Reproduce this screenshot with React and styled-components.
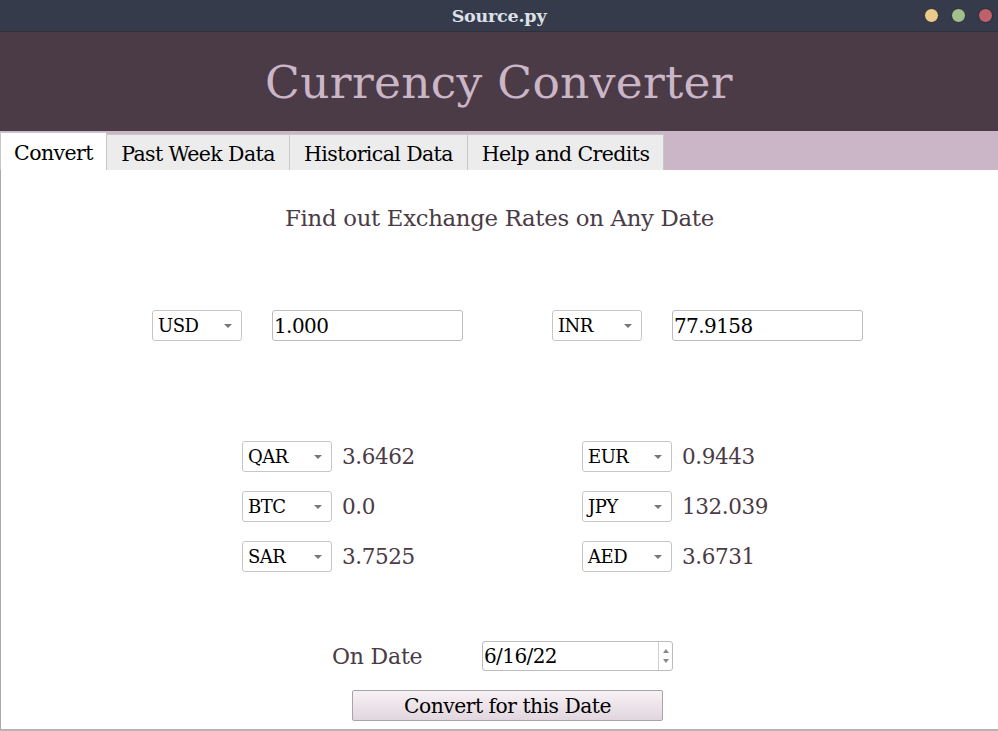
import React from "react";
import styled, { createGlobalStyle } from "styled-components";

const Global = createGlobalStyle`
  html, body { margin: 0; padding: 0; background: #ffffff; }
  body { font-family: "DejaVu Serif", "Liberation Serif", serif; }
  * { box-sizing: border-box; }
`;

const Window = styled.div`
  width: 998px;
  height: 731px;
  display: flex;
  flex-direction: column;
  overflow: hidden;
  font-family: "DejaVu Serif", "Liberation Serif", serif;
`;

const TitleBar = styled.div`
  height: 32px;
  background: #353b4a;
  display: flex;
  align-items: center;
  justify-content: center;
  position: relative;
  border-bottom: 1px solid #2c303b;
`;

const TitleText = styled.div`
  color: #dde1e8;
  font-weight: bold;
  font-size: 17.5px;
  letter-spacing: -0.2px;
`;

const Dots = styled.div`
  position: absolute;
  right: 5px;
  top: 8px;
  display: flex;
  gap: 12px;
`;

const Dot = styled.span`
  width: 15px;
  height: 15px;
  border-radius: 50%;
  background: ${(p) => p.$c};
  border: 1px solid #262a33;
`;

const Header = styled.div`
  height: 99px;
  background: #4a3b46;
  display: flex;
  align-items: center;
  justify-content: center;
`;

const AppTitle = styled.h1`
  margin: 0;
  font-weight: normal;
  font-size: 45.5px;
  color: #cbb6c8;
  letter-spacing: 0.3px;
  padding-top: 2px;
`;

const TabBar = styled.div`
  height: 39px;
  background: #cbb6c7;
  display: flex;
  align-items: flex-end;
`;

const Tab = styled.div`
  height: ${(p) => (p.$active ? "38px" : "36px")};
  width: ${(p) => p.$w}px;
  background: ${(p) => (p.$active ? "#ffffff" : "#ececec")};
  border: 1px solid #c8c8c8;
  border-bottom: none;
  border-left: ${(p) => (p.$active ? "1px solid #c8c8c8" : "none")};
  display: flex;
  align-items: center;
  justify-content: center;
  font-size: 20.5px;
  color: #000;
  letter-spacing: -0.6px;
  padding-top: 2px;
`;

const Content = styled.div`
  flex: 1;
  background: #fff;
  border-left: 1px solid #aaaaaa;
  border-bottom: 2px solid #b4b4b4;
  display: flex;
  flex-direction: column;
  color: #4a3b46;
`;

const Heading = styled.div`
  margin-top: 33px;
  text-align: center;
  font-size: 22.8px;
  letter-spacing: -0.3px;
  line-height: 30px;
`;

const MainRow = styled.div`
  margin-top: 77px;
  margin-left: 151px;
  display: flex;
  gap: 89px;
`;

const Pair = styled.div`
  display: flex;
  align-items: center;
  gap: ${(p) => p.$gap}px;
`;

const SelectBox = styled.div`
  width: 90px;
  height: 31px;
  border: 1px solid #c6c6c6;
  border-radius: 3px;
  background: #fff;
  display: flex;
  align-items: center;
  justify-content: space-between;
  padding: 0 9px 0 5px;
  font-size: 18px;
  color: #000;
  letter-spacing: -0.5px;
`;

const Caret = styled.span`
  width: 0;
  height: 0;
  border-left: 4px solid transparent;
  border-right: 4px solid transparent;
  border-top: 4px solid #777;
`;

const TextInput = styled.div`
  width: ${(p) => p.$w}px;
  height: ${(p) => p.$h}px;
  border: 1px solid #bcbcbc;
  border-radius: 3px;
  background: #fff;
  display: flex;
  align-items: center;
  padding-left: 1px;
  font-size: 20px;
  color: #000;
  letter-spacing: -0.6px;
  position: relative;
`;

const RatesGrid = styled.div`
  margin-top: 100px;
  margin-left: 241px;
  display: grid;
  grid-template-columns: 340px 340px;
  row-gap: 19px;
`;

const RateValue = styled.span`
  font-size: 21.5px;
  color: #4a3b46;
  letter-spacing: -0.4px;
`;

const DateRow = styled.div`
  margin-top: 69px;
  margin-left: 331px;
  display: flex;
  align-items: center;
`;

const DateLabel = styled.span`
  width: 150px;
  font-size: 22px;
  color: #4a3b46;
  letter-spacing: -0.2px;
`;

const Spinner = styled.div`
  position: absolute;
  right: 0;
  top: 0;
  bottom: 0;
  width: 14px;
  border-left: 1px solid #d0d0d0;
  display: flex;
  flex-direction: column;
  align-items: center;
  justify-content: center;
  gap: 6px;
`;

const SpinArrow = styled.span`
  width: 0;
  height: 0;
  border-left: 3px solid transparent;
  border-right: 3px solid transparent;
  ${(p) => (p.$up ? "border-bottom: 4px solid #888;" : "border-top: 4px solid #888;")}
`;

const Button = styled.button`
  margin-top: 19px;
  margin-left: 351px;
  width: 311px;
  height: 31px;
  border: 1px solid #a9a4a8;
  border-radius: 2px;
  background: linear-gradient(#f7f1f5, #e1d6de);
  font-family: "DejaVu Serif", "Liberation Serif", serif;
  font-size: 20.3px;
  letter-spacing: -0.5px;
  color: #000;
  padding: 0;
`;

const Select = ({ value }) => (
  <SelectBox>
    <span>{value}</span>
    <Caret />
  </SelectBox>
);

const rates = [
  ["QAR", "3.6462"],
  ["EUR", "0.9443"],
  ["BTC", "0.0"],
  ["JPY", "132.039"],
  ["SAR", "3.7525"],
  ["AED", "3.6731"],
];

const tabs = [
  ["Convert", 107, true],
  ["Past Week Data", 183],
  ["Historical Data", 178],
  ["Help and Credits", 196],
];

export default function App() {
  return (
    <>
      <Global />
      <Window>
        <TitleBar>
          <TitleText>Source.py</TitleText>
          <Dots>
            <Dot $c="#ebcb8b" />
            <Dot $c="#a3be8c" />
            <Dot $c="#bf616a" />
          </Dots>
        </TitleBar>
        <Header>
          <AppTitle>Currency Converter</AppTitle>
        </Header>
        <TabBar>
          {tabs.map(([t, w, a]) => (
            <Tab key={t} $w={w} $active={a}>
              {t}
            </Tab>
          ))}
        </TabBar>
        <Content>
          <Heading>Find out Exchange Rates on Any Date</Heading>
          <MainRow>
            <Pair $gap={30}>
              <Select value="USD" />
              <TextInput $w={191} $h={31}>1.000</TextInput>
            </Pair>
            <Pair $gap={30}>
              <Select value="INR" />
              <TextInput $w={191} $h={31}>77.9158</TextInput>
            </Pair>
          </MainRow>
          <RatesGrid>
            {rates.map(([c, v]) => (
              <Pair key={c} $gap={10}>
                <Select value={c} />
                <RateValue>{v}</RateValue>
              </Pair>
            ))}
          </RatesGrid>
          <DateRow>
            <DateLabel>On Date</DateLabel>
            <TextInput $w={191} $h={30}>
              6/16/22
              <Spinner>
                <SpinArrow $up />
                <SpinArrow />
              </Spinner>
            </TextInput>
          </DateRow>
          <Button>Convert for this Date</Button>
        </Content>
      </Window>
    </>
  );
}
